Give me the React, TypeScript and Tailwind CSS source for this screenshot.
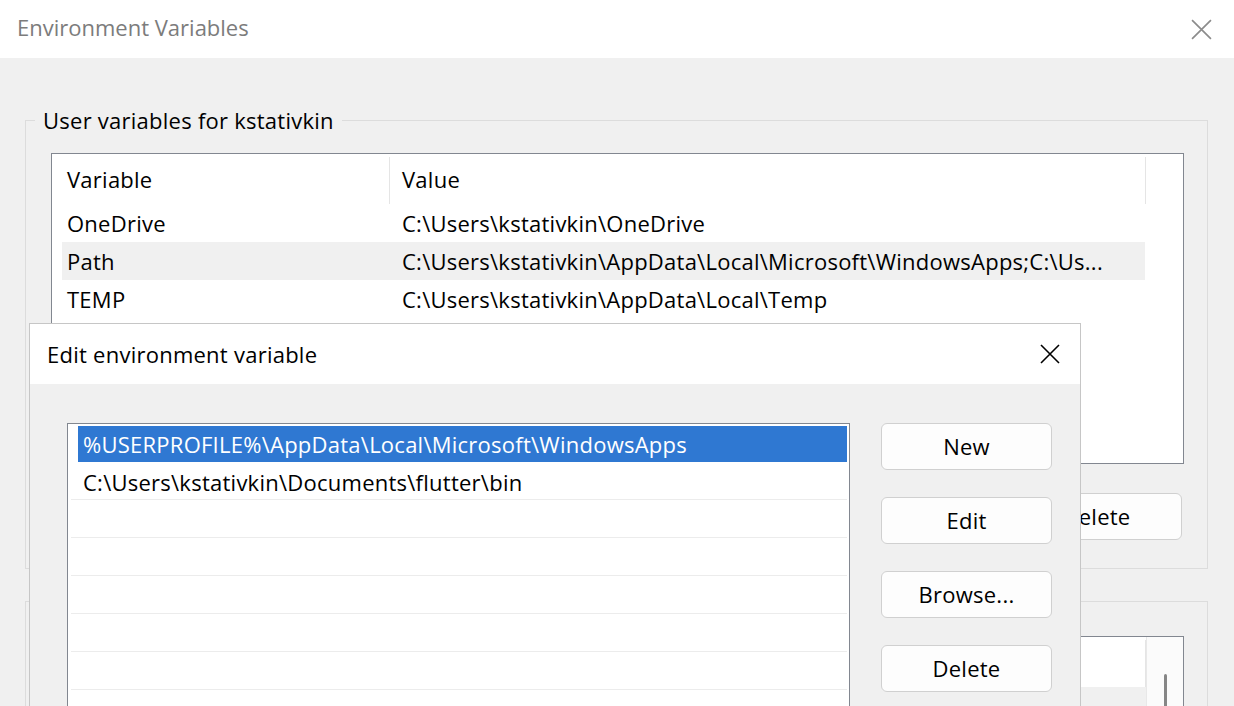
const CloseIcon = ({ className }: { className?: string }) => (
  <svg viewBox="0 0 20 20" className={className} fill="none" stroke="currentColor" strokeWidth="1.6">
    <path d="M1 1 L19 19 M19 1 L1 19" />
  </svg>
)

const Button = ({ label }: { label: string }) => (
  <button className="w-[171px] h-[47px] rounded-[6px] border border-[#d0d0d0] bg-[#fdfdfd] text-black flex items-center justify-center">
    {label}
  </button>
)

const userVars = [
  { name: "OneDrive", value: "C:\\Users\\kstativkin\\OneDrive" },
  { name: "Path", value: "C:\\Users\\kstativkin\\AppData\\Local\\Microsoft\\WindowsApps;C:\\Us...", hover: true },
  { name: "TEMP", value: "C:\\Users\\kstativkin\\AppData\\Local\\Temp" },
]

const pathEntries = [
  "%USERPROFILE%\\AppData\\Local\\Microsoft\\WindowsApps",
  "C:\\Users\\kstativkin\\Documents\\flutter\\bin",
  "",
  "",
  "",
  "",
  "",
]

const ListHeader = () => (
  <div className="h-[50px] flex ml-[10px]">
    <div className="w-[327px] pl-[5px] pt-[1px] flex items-center">Variable</div>
    <div className="w-px h-[47px] mt-[3px] bg-[#e5e5e5]" />
    <div className="w-[755px] pl-[12px] pt-[1px] flex items-center">Value</div>
    <div className="w-px h-[47px] mt-[3px] bg-[#e5e5e5]" />
  </div>
)

const GroupBox = ({ label, children, className }: { label: string; children: React.ReactNode; className?: string }) => (
  <div className={`relative border border-[#dcdcdc] ${className ?? ""}`}>
    <span className="absolute -top-[16px] left-[9px] px-[8px] bg-[#f0f0f0] leading-[30px]">{label}</span>
    {children}
  </div>
)

export default function App() {
  return (
    <div className="relative w-[1234px] h-[706px] overflow-hidden bg-[#f0f0f0] text-[22px] tracking-[0.25px] text-black font-['Open_Sans','Noto_Sans',sans-serif]">
      {/* main window */}
      <div className="h-[58px] bg-white flex items-center justify-between pl-[17px] pr-[22px]">
        <span className="text-[#7c7c7c] pb-[3px] tracking-normal">Environment Variables</span>
        <CloseIcon className="w-[21px] h-[21px] text-[#8c8c8c]" />
      </div>

      <div className="pl-[25px] pr-[26px] pt-[62px]">
        <GroupBox label="User variables for kstativkin" className="h-[449px]">
          <div className="ml-[25px] mr-[23px] mt-[32px] h-[311px] border border-[#828790] bg-white overflow-hidden">
            <ListHeader />
            {userVars.map((v) => (
              <div
                key={v.name}
                className={`h-[38px] ml-[10px] w-[1083px] flex items-center ${v.hover ? "bg-[#f0f0f0]" : ""}`}
              >
                <div className="w-[327px] pl-[5px]">{v.name}</div>
                <div className="pl-[13px] whitespace-nowrap">{v.value}</div>
              </div>
            ))}
          </div>
          <div className="flex justify-end gap-[16px] mr-[25px] mt-[29px]">
            <Button label="New..." />
            <Button label="Edit..." />
            <Button label="Delete" />
          </div>
        </GroupBox>

        <GroupBox label="System variables" className="mt-[32px] h-[200px]">
          <div className="ml-[25px] mr-[23px] mt-[34px] h-[200px] border border-[#828790] bg-white flex">
            <div className="flex-1">
              <ListHeader />
              <div className="h-[38px] ml-[10px] bg-[#f0f0f0]" />
            </div>
            <div className="w-[37px] border-l border-[#e8e8e8] bg-[#fbfbfb] flex justify-center pt-[37px]">
              <div className="w-[3px] h-[120px] rounded-full bg-[#868686]" />
            </div>
          </div>
        </GroupBox>
      </div>

      {/* edit dialog on top */}
      <div className="absolute left-[29px] top-[323px] w-[1052px] h-[420px] border border-[#c6c6c6] bg-[#f0f0f0]">
        <div className="h-[60px] bg-white flex items-center justify-between pl-[17px] pr-[20px]">
          <span>Edit environment variable</span>
          <CloseIcon className="w-[20px] h-[20px] text-black" />
        </div>
        <div className="flex pl-[37px] pt-[39px]">
          <div className="w-[783px] h-[320px] border border-[#828790] bg-white pt-[2px] pr-[2px] pl-[3px]">
            {pathEntries.map((p, i) =>
              i === 0 ? (
                <div key={i} className="ml-[7px] h-[36px] bg-[#2f78d2] text-white pl-[5px] pt-[1px] flex items-center whitespace-nowrap">
                  {p}
                </div>
              ) : (
                <div key={i} className="h-[38px] pl-[12px] pt-[3px] border-b border-[#ececec] flex items-center whitespace-nowrap">
                  {p}
                </div>
              )
            )}
          </div>
          <div className="ml-[31px] flex flex-col gap-[27px]">
            <Button label="New" />
            <Button label="Edit" />
            <Button label="Browse..." />
            <Button label="Delete" />
          </div>
        </div>
      </div>
    </div>
  )
}
